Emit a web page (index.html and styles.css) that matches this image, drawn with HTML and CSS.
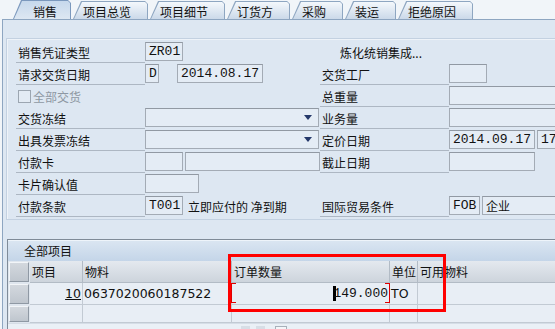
FILE: index.html
```html
<!DOCTYPE html>
<html lang="zh">
<head>
  <meta charset="UTF-8" />
  <title>销售</title>
  <link rel="stylesheet" href="styles.css">
</head>
<body>
  <div class="tabs">
    <div class="tab active"><span>销售</span></div>
    <div class="tab"><span>项目总览</span></div>
    <div class="tab"><span>项目细节</span></div>
    <div class="tab"><span>订货方</span></div>
    <div class="tab"><span>采购</span></div>
    <div class="tab"><span>装运</span></div>
    <div class="tab"><span>拒绝原因</span></div>
  </div>

  <div class="panel">
    <div class="group">
      <div class="row">
        <div class="lbl">销售凭证类型</div>
        <div class="cell"><span class="fld w38">ZR01</span></div>
        <div class="lbl none indent">炼化统销集成...</div>
        <div class="cell wide"></div>
      </div>
      <div class="row">
        <div class="lbl">请求交货日期</div>
        <div class="cell"><span class="fld w14">D</span><span class="fld w86 gap16">2014.08.17</span></div>
        <div class="lbl">交货工厂</div>
        <div class="cell wide"><span class="fld w38"></span></div>
      </div>
      <div class="row">
        <div class="lbl none check"><span class="box"></span>全部交货</div>
        <div class="cell"></div>
        <div class="lbl">总重量</div>
        <div class="cell wide"><span class="fld w130"></span></div>
      </div>
      <div class="row">
        <div class="lbl">交货冻结</div>
        <div class="cell"><span class="fld dd w174"><svg width="8" height="5" viewBox="0 0 8 5"><polygon points="0,0 8,0 4,5" fill="#24386a"/></svg></span></div>
        <div class="lbl">业务量</div>
        <div class="cell wide"><span class="fld w130"></span></div>
      </div>
      <div class="row">
        <div class="lbl">出具发票冻结</div>
        <div class="cell"><span class="fld dd w174"><svg width="8" height="5" viewBox="0 0 8 5"><polygon points="0,0 8,0 4,5" fill="#24386a"/></svg></span></div>
        <div class="lbl">定价日期</div>
        <div class="cell wide"><span class="fld w86">2014.09.17</span><span class="fld w40">17</span></div>
      </div>
      <div class="row">
        <div class="lbl">付款卡</div>
        <div class="cell"><span class="fld w38"></span><span class="fld w135"></span></div>
        <div class="lbl">截止日期</div>
        <div class="cell wide"><span class="fld w86"></span></div>
      </div>
      <div class="row">
        <div class="lbl">卡片确认值</div>
        <div class="cell"><span class="fld w54"></span></div>
        <div class="lbl none"></div>
        <div class="cell wide"></div>
      </div>
      <div class="row">
        <div class="lbl">付款条款</div>
        <div class="cell"><span class="fld w38">T001</span><span class="txt">立即应付的 净到期</span></div>
        <div class="lbl">国际贸易条件</div>
        <div class="cell wide"><span class="fld w31">FOB</span><span class="fld w90 cjk">企业</span></div>
      </div>
    </div>

    <div class="items">
      <div class="items-title">全部项目</div>
      <div class="grid">
        <div class="sel head"><span class="btn"></span></div>
        <div class="hd">项目</div>
        <div class="hd">物料</div>
        <div class="hd">订单数量</div>
        <div class="hd">单位</div>
        <div class="hd last">可用物料</div>

        <div class="sel"><span class="btn"></span></div>
        <div class="td num"><u>10</u></div>
        <div class="td">0637020060187522</div>
        <div class="td qty focus"><span class="caret">1</span>49.000</div>
        <div class="td">TO</div>
        <div class="td last"></div>

        <div class="sel short"><span class="btn"></span></div>
        <div class="td short"></div>
        <div class="td short"></div>
        <div class="td short"></div>
        <div class="td short"></div>
        <div class="td short last"></div>
      </div>
      <div class="grid-foot">
        <span class="mini"></span>
        <span class="mini"></span>
        <span class="mini sq"></span>
      </div>
    </div>
  </div>

  <div class="mark"></div>
</body>
</html>
```

FILE: styles.css
```css
body {
  margin: 0;
  width: 555px;
  height: 329px;
  overflow: hidden;
  position: relative;
  background: #f1f5f9;
  font-family: "Noto Sans CJK SC", sans-serif;
  font-size: 12px;
  color: #111;
}

/* tab strip */
.tabs {
  display: flex;
  align-items: flex-end;
  gap: 2px;
  height: 19px;
  padding-left: 13px;
}
.tab {
  height: 18px;
  padding: 1px 1px 0 1px;
  box-sizing: border-box;
  background: #8ea6c1;
  clip-path: polygon(8px 0, calc(100% - 3px) 0, 100% 3px, 100% 100%, 0 100%);
}
.tab span {
  display: block;
  height: 17px;
  padding: 0 16px 0 9px;
  line-height: 19px;
  background: linear-gradient(#f4f8fc, #cbd9e9);
  clip-path: polygon(8px 0, calc(100% - 2px) 0, 100% 2px, 100% 100%, 0 100%);
}
.tab.active {
  height: 19px;
  background: #7b98bd;
}
.tab.active span {
  height: 18px;
  padding: 0 13px 0 19px;
  line-height: 21px;
  background: linear-gradient(#c6d8ec, #dde7f2);
}

/* panel */
.panel {
  margin-left: 2px;
  height: 320px;
  border-left: 1px solid #8ea6c1;
  border-top: 1px solid #8ea6c1;
  background: #dde7f2;
}
.group {
  margin: 18px 0 0 3px;
  padding: 2px 0 2px 9px;
  border-top: 1px solid #c3d1e1;
  border-left: 1px solid #c3d1e1;
  border-bottom: 1px solid #c3d1e1;
  box-shadow: inset 1px 1px 0 #eef3f9;
}
.row {
  display: flex;
  height: 22px;
}
.lbl {
  flex: none;
  width: 129px;
  height: 22px;
  box-sizing: border-box;
  padding: 3px 0 0 2px;
  line-height: 17px;
  border-bottom: 1px solid #adb7c3;
  white-space: nowrap;
}
.lbl.none {
  border-bottom-color: transparent;
}
.lbl.indent {
  padding-left: 20px;
}
.lbl.check {
  display: flex;
  align-items: center;
  padding-top: 1px;
  color: #8e98a3;
}
.box {
  width: 11px;
  height: 11px;
  margin-right: 2px;
  border: 1px solid #9ca6b1;
  background: #e3ebf4;
}
.cell {
  flex: none;
  width: 175px;
  display: flex;
  gap: 2px;
  padding-top: 1px;
  white-space: nowrap;
}
.cell.wide {
  width: 130px;
}
.fld {
  display: block;
  flex: none;
  height: 19px;
  box-sizing: border-box;
  padding-left: 3px;
  border: 1px solid #a3abb5;
  border-top-color: #9199a3;
  background: #e4ecf5;
  font-family: "Liberation Mono", monospace;
  font-size: 13px;
  line-height: 17px;
  color: #111;
}
.fld.cjk {
  font-family: "Noto Sans CJK SC", sans-serif;
  font-size: 12px;
}
.fld.dd {
  display: flex;
  align-items: center;
  justify-content: flex-end;
  padding-right: 6px;
}
.gap16 { margin-left: 16px; }
.w14 { width: 14px; }
.w31 { width: 31px; }
.w38 { width: 38px; }
.w40 { width: 40px; }
.w54 { width: 54px; }
.w86 { width: 86px; }
.w90 { width: 90px; }
.w130 { width: 130px; }
.w135 { width: 135px; }
.w174 { width: 174px; }
.txt {
  padding: 2px 0 0 3px;
  line-height: 17px;
}

/* item table */
.items {
  margin: 19px 0 0 4px;
  border-top: 1px solid #7f8b98;
  border-left: 1px solid #7f8b98;
}
.items-title {
  height: 21px;
  padding-left: 16px;
  line-height: 22px;
  background: linear-gradient(#dbe6f2, #c4d5e8);
  box-shadow: inset 0 1px 0 #eef4fa;
}
.grid {
  display: grid;
  grid-template-columns: 22px 53px 149px 158px 28px 1fr;
}
.sel {
  height: 22px;
  box-sizing: border-box;
  padding: 1px 1px 1px 1px;
  background: #dfe6ee;
}
.sel.short {
  height: 18px;
}
.btn {
  display: block;
  height: 100%;
  box-sizing: border-box;
  border: 1px solid #8f99a4;
  border-top-color: #f2f5f8;
  border-left-color: #f2f5f8;
  background: linear-gradient(#d3d8de, #bfc6ce);
}
.hd {
  height: 22px;
  box-sizing: border-box;
  padding-left: 2px;
  line-height: 22px;
  border-right: 1px solid #b2bbc5;
  border-bottom: 1px solid #b2bbc5;
  background: linear-gradient(#e4e9ef, #cdd4dc);
  white-space: nowrap;
}
.td {
  height: 22px;
  box-sizing: border-box;
  padding-left: 1px;
  line-height: 21px;
  border-right: 1px solid #c2cad3;
  border-bottom: 1px solid #c2cad3;
  background: #e8eef5;
  font-family: "DejaVu Sans", sans-serif;
  font-size: 12.5px;
  white-space: nowrap;
}
.td.short {
  height: 18px;
}
.hd.last, .td.last {
  border-right: none;
}
.td.num {
  text-align: right;
  padding-right: 1px;
}
.td.qty {
  position: relative;
  text-align: right;
  padding-right: 1px;
  font-family: "Liberation Mono", monospace;
  font-size: 13px;
}
.td.focus::before,
.td.focus::after {
  content: "";
  position: absolute;
  top: 0;
  bottom: 1px;
  width: 4px;
  border: 1px solid #e00000;
}
.td.focus::before {
  left: -1px;
  border-right: none;
}
.td.focus::after {
  right: -1px;
  border-left: none;
}
.caret {
  box-shadow: inset 3px 0 0 #000;
}
.grid-foot {
  display: flex;
  gap: 6px;
  height: 10px;
  padding: 2px 0 0 233px;
  background: #eaf0f6;
  border-top: 1px solid #d5dde6;
}
.mini {
  width: 9px;
  height: 9px;
  background: #d7dee6;
}
.mini.sq {
  width: 10px;
  margin-left: 4px;
  border: 1px solid #a7b0ba;
  background: #f3f6f9;
}

/* red highlight drawn over the table */
.mark {
  position: absolute;
  left: 228px;
  top: 254px;
  width: 218px;
  height: 58px;
  box-sizing: border-box;
  border: 3px solid #ff0000;
}
```
